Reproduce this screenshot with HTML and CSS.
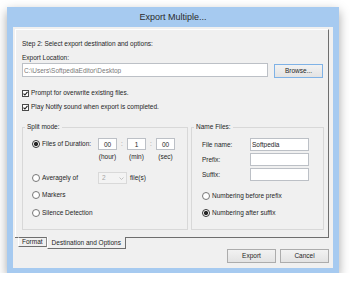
FILE: index.html
```html
<!DOCTYPE html>
<html lang="en">
  <head>
    <meta charset="UTF-8" />
    <meta name="viewport" content="width=device-width, initial-scale=1.0" />
    <title>Export Multiple...</title>
    <link rel="stylesheet" href="styles.css">
  </head>
  <body>
    <div class="window">
      <div class="titlebar">Export Multiple...</div>
      <div class="client">
        <div class="page">
          <div class="step">Step 2: Select export destination and options:</div>
          <div class="field-label">Export Location:</div>
          <div class="location-row">
            <input type="text" class="text location" value="C:\Users\SoftpediaEditor\Desktop" readonly />
            <button class="btn default">Browse...</button>
          </div>
          <label class="check-row first">
            <span class="checkbox"><svg width="5" height="5" viewBox="0 0 5 5"><path d="M0.5 2.6 L1.9 4 L4.5 0.8" fill="none" stroke="#1e1e1e" stroke-width="1.1"/></svg></span>
            Prompt for overwrite existing files.
          </label>
          <label class="check-row second">
            <span class="checkbox"><svg width="5" height="5" viewBox="0 0 5 5"><path d="M0.5 2.6 L1.9 4 L4.5 0.8" fill="none" stroke="#1e1e1e" stroke-width="1.1"/></svg></span>
            Play Notify sound when export is completed.
          </label>

          <div class="groups">
            <fieldset class="group split">
              <legend>Split mode:</legend>
              <div class="group-body split-body">
                <div class="split-row">
                  <span class="choice"><span class="radio checked"></span>Files of Duration:</span>
                  <input type="text" class="text time" value="00" />
                  <span class="colon">:</span>
                  <input type="text" class="text time" value="1" />
                  <span class="colon">:</span>
                  <input type="text" class="text time" value="00" />
                </div>
                <div class="time-units">
                  <span>(hour)</span>
                  <span>(min)</span>
                  <span>(sec)</span>
                </div>
                <div class="split-row average">
                  <span class="choice"><span class="radio"></span>Averagely of</span>
                  <span class="combo">2<svg width="5" height="3" viewBox="0 0 5 3"><path d="M0.5 0.5 L2.5 2.5 L4.5 0.5" fill="none" stroke="#b5b5b5" stroke-width="0.8"/></svg></span>
                  <span class="files">file(s)</span>
                </div>
                <div class="radio-row markers"><span class="radio"></span>Markers</div>
                <div class="radio-row silence"><span class="radio"></span>Silence Detection</div>
              </div>
            </fieldset>

            <fieldset class="group names">
              <legend>Name Files:</legend>
              <div class="group-body names-body">
                <div class="name-row">
                  <span class="name-label">File name:</span>
                  <input type="text" class="text name-input" value="Softpedia" />
                </div>
                <div class="name-row">
                  <span class="name-label">Prefix:</span>
                  <input type="text" class="text name-input" value="" />
                </div>
                <div class="name-row">
                  <span class="name-label">Suffix:</span>
                  <input type="text" class="text name-input" value="" />
                </div>
                <div class="radio-row numbering-first"><span class="radio"></span>Numbering before prefix</div>
                <div class="radio-row numbering-second"><span class="radio checked"></span>Numbering after suffix</div>
              </div>
            </fieldset>
          </div>
        </div>

        <div class="tab-strip">
          <span class="tab-edge"></span>
          <span class="tab">Format</span>
          <span class="tab active">Destination and Options</span>
          <span class="tab-fill"></span>
        </div>

        <div class="actions">
          <button class="btn">Export</button>
          <button class="btn">Cancel</button>
        </div>
      </div>
    </div>
  </body>
</html>
```

FILE: styles.css
```css
body {
  margin: 0;
  background-color: #fff;
  font-family: "Liberation Sans", Arial, sans-serif;
  font-size: 6.5px;
  line-height: 8px;
  color: #1e1e1e;
}
.window {
  width: 332px;
  height: 266px;
  margin: 7px 0 0 7px;
  padding: 0 6px 5px;
  box-sizing: border-box;
  display: flex;
  flex-direction: column;
  background-color: #a6caf0;
  box-shadow: 0 4px 10px rgba(0, 0, 0, 0.35);
}
.titlebar {
  height: 20px;
  display: flex;
  align-items: center;
  justify-content: center;
  font-size: 9px;
  color: #2b2b2b;
}
.client {
  flex: 1;
  display: flex;
  flex-direction: column;
  padding: 2px 4px 0 2px;
  background-color: #f0f0f0;
}
.page {
  height: 208px;
  box-sizing: border-box;
  padding: 10px 5px 0 6px;
  border-top: 1px solid #fff;
  border-left: 1px solid #fff;
  border-right: 1px solid #6e6e6e;
}
.field-label {
  margin-top: 6px;
}
.location-row {
  display: flex;
  align-items: flex-start;
  gap: 6px;
  margin-top: 1px;
}
.text {
  box-sizing: border-box;
  margin: 0;
  padding: 0 1px;
  border: 1px solid #bcc0c6;
  background-color: #fff;
  font: inherit;
  color: #1e1e1e;
  outline: none;
}
.location {
  width: 246px;
  height: 14px;
  color: #7a7a7a;
}
.btn {
  box-sizing: border-box;
  width: 49px;
  height: 14px;
  margin: 0;
  padding: 0;
  border: 1px solid #acacac;
  background: linear-gradient(#f2f2f2, #e3e3e3);
  font: inherit;
  color: #1e1e1e;
}
.btn.default {
  margin-top: 1px;
  border-color: #7fb2e6;
}
.check-row {
  display: flex;
  align-items: center;
  gap: 2px;
  height: 8px;
}
.check-row.first {
  margin-top: 11px;
}
.check-row.second {
  margin-top: 6px;
}
.checkbox {
  width: 7px;
  height: 7px;
  box-sizing: border-box;
  border: 1px solid #4a4a4a;
  background-color: #fff;
  display: flex;
}
.groups {
  display: flex;
  gap: 3px;
  margin-top: 12px;
}
.group {
  margin: 0;
  padding: 0;
  min-width: 0;
  flex-shrink: 0;
  box-sizing: border-box;
  border: 1px solid #d8d8d8;
}
.group legend {
  padding: 0 2px;
  margin-left: 2px;
  line-height: 8px;
}
.split {
  width: 166px;
}
.names {
  width: 133px;
}
.group-body {
  display: flex;
  flex-direction: column;
  padding: 7px 0 12px 9px;
}
.names-body {
  padding-left: 10px;
}
.radio {
  width: 8px;
  height: 8px;
  box-sizing: border-box;
  border: 1px solid #777;
  border-radius: 50%;
  background-color: #fff;
  flex-shrink: 0;
}
.radio.checked {
  border-color: #333;
  background: radial-gradient(circle, #262626 0 1.8px, #fff 2.4px);
}
.choice {
  display: flex;
  align-items: center;
  gap: 2px;
  width: 66px;
}
.split-row {
  display: flex;
  align-items: center;
  height: 12px;
}
.time {
  width: 19px;
  height: 12px;
  text-align: center;
}
.colon {
  width: 10px;
  text-align: center;
  color: #999;
}
.time-units {
  display: flex;
  gap: 10px;
  margin-top: 3px;
  padding-left: 66px;
}
.time-units span {
  width: 19px;
  text-align: center;
}
.split-row.average {
  margin-top: 11px;
}
.combo {
  width: 29px;
  height: 12px;
  box-sizing: border-box;
  display: flex;
  align-items: center;
  justify-content: space-between;
  padding: 0 2px 0 3px;
  border: 1px solid #d9d9d9;
  background-color: #f3f3f3;
  color: #a5a5a5;
}
.files {
  margin-left: 3px;
}
.radio-row {
  display: flex;
  align-items: center;
  gap: 2px;
  height: 8px;
}
.markers {
  margin-top: 7px;
}
.silence {
  margin-top: 10px;
}
.name-row {
  display: flex;
  align-items: center;
  height: 13px;
  margin-bottom: 2px;
}
.name-label {
  width: 48px;
}
.name-input {
  width: 59px;
  height: 13px;
}
.numbering-first {
  margin-top: 9px;
}
.numbering-second {
  margin-top: 9px;
}
.tab-strip {
  display: flex;
  align-items: flex-start;
  height: 10px;
}
.tab-edge {
  width: 3px;
  flex-shrink: 0;
  border-top: 1px solid #6e6e6e;
}
.tab {
  height: 10px;
  box-sizing: border-box;
  padding: 0 3px;
  display: flex;
  align-items: center;
  border-top: 1px solid #6e6e6e;
  border-left: 1px solid #fff;
  border-right: 1px solid #8a8a8a;
  border-bottom: 1px solid #6e6e6e;
}
.tab.active {
  height: 12px;
  padding: 0 4px;
  border-top: none;
  border-right-color: #6e6e6e;
}
.tab-fill {
  flex: 1;
  border-top: 1px solid #6e6e6e;
}
.actions {
  display: flex;
  justify-content: flex-end;
  gap: 4px;
  margin-top: 2px;
}
```
